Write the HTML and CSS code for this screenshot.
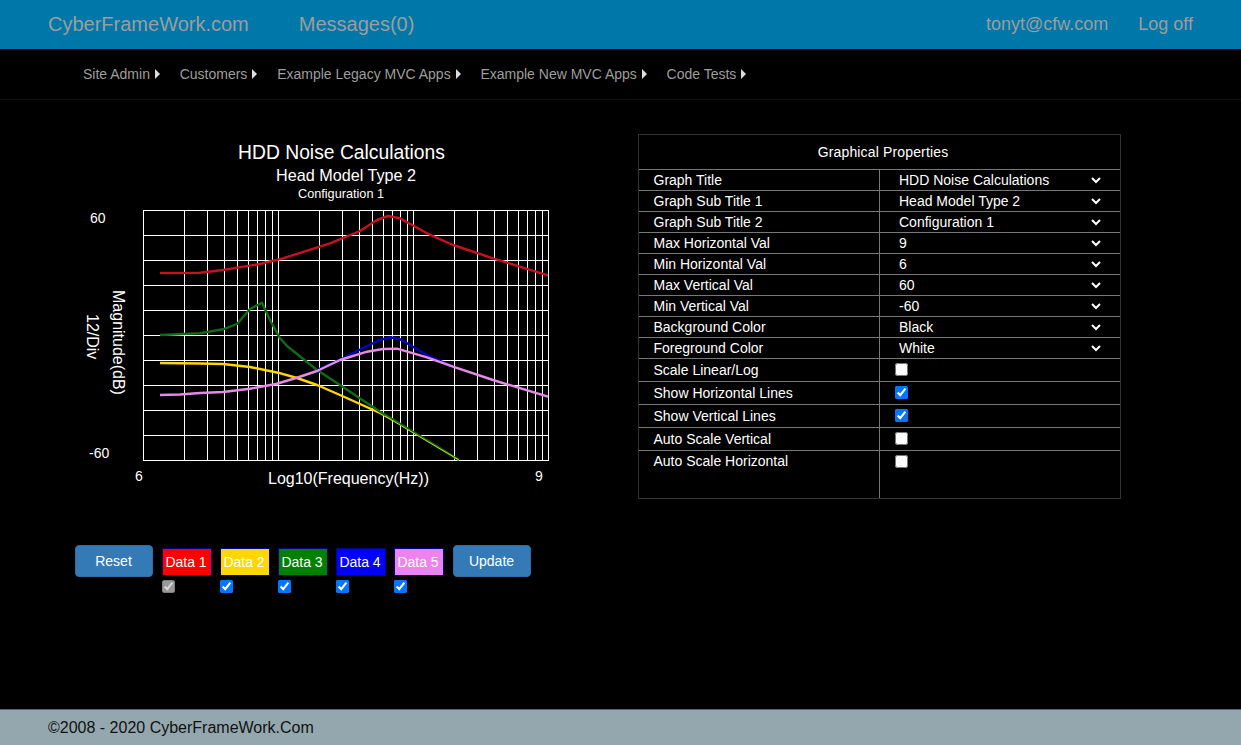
FILE: index.html
```html
<!DOCTYPE html>
<html lang="en">
<head>
<meta charset="utf-8">
<title>HDD Noise Calculations</title>
<link rel="stylesheet" href="styles.css">
</head>
<body>
<header class="topbar">
  <nav class="topbar-left"><a href="#">CyberFrameWork.com</a><a href="#">Messages(0)</a></nav>
  <nav class="topbar-right"><a href="#">tonyt@cfw.com</a><a href="#">Log off</a></nav>
</header>
<nav class="menu">
  <a href="#">Site Admin<i class="caret"></i></a>
  <a href="#">Customers<i class="caret"></i></a>
  <a href="#">Example Legacy MVC Apps<i class="caret"></i></a>
  <a href="#">Example New MVC Apps<i class="caret"></i></a>
  <a href="#">Code Tests<i class="caret"></i></a>
</nav>
<main class="content">
  <section class="graph-col">
    <svg class="graph" width="520" height="370" viewBox="60 130 520 370" xmlns="http://www.w3.org/2000/svg">
      <path class="grid" d="M143.5 210V461M184.5 210V461M207.5 210V461M224.5 210V461M237.5 210V461M248.5 210V461M257.5 210V461M265.5 210V461M272.5 210V461M278.5 210V461M319.5 210V461M342.5 210V461M359.5 210V461M372.5 210V461M383.5 210V461M392.5 210V461M400.5 210V461M407.5 210V461M413.5 210V461M454.5 210V461M477.5 210V461M494.5 210V461M507.5 210V461M518.5 210V461M527.5 210V461M535.5 210V461M542.5 210V461M548.5 210V461M143 210.5H549M143 235.5H549M143 260.5H549M143 285.5H549M143 310.5H549M143 335.5H549M143 360.5H549M143 385.5H549M143 410.5H549M143 435.5H549M143 460.5H549"/>
      <polyline class="trace t-red" points="160,273 200,272.7 223,270 260,264 283,258.3 330,243.3 360,231 377,220 388,216 400,218.3 427,233.3 453,245 493,258.3 548,275.3"/>
      <polyline class="trace t-yellow" points="160,363 200,363.5 223,364 250,367 278,372.7 297,378 317,385 340,395 380,413 393,420"/>
      <polyline class="trace t-green" points="160,335 200,333.3 223,329.3 237,324 250,309 262,302.7 270,320 280,338.3 287,346 317,370 340,385 380,411.7 420,436 459,460"/>
      <polyline class="trace-fine t-mix" points="385,416 420,437 459,460"/>
      <polyline class="trace t-blue" points="317,370 343,358.3 367,346 380,340 390,337.3 400,339.3 427,355 453,366.7"/>
      <polyline class="trace t-violet" points="160,395 180,394.5 200,393 223,392 250,388.7 276,384 296,378 317,371 340,360 367,351.7 383,349 397,348.7 427,357.3 453,366.7 493,380 548,396.7"/>
      <text class="t-title mid" x="341.5" y="159">HDD Noise Calculations</text>
      <text class="t-sub mid" x="346" y="181">Head Model Type 2</text>
      <text class="t-sub2 mid" x="341" y="198">Configuration 1</text>
      <text class="t-tick" x="90" y="223">60</text>
      <text class="t-tick" x="89" y="458">-60</text>
      <text class="t-tick" x="135" y="481">6</text>
      <text class="t-tick" x="535" y="481">9</text>
      <text class="t-axis" x="268" y="484">Log10(Frequency(Hz))</text>
      <text class="t-axis" transform="rotate(90 113 290)" x="113" y="290">Magnitude(dB)</text>
      <text class="t-axis" transform="rotate(90 87 314)" x="87" y="314">12/Div</text>
    </svg>
    <div class="controls">
      <button class="btn" type="button">Reset</button>
      <div class="series-list">
        <div class="series"><span class="swatch s-red">Data 1</span><input type="checkbox" checked disabled></div>
        <div class="series"><span class="swatch s-gold">Data 2</span><input type="checkbox" checked></div>
        <div class="series"><span class="swatch s-green">Data 3</span><input type="checkbox" checked></div>
        <div class="series"><span class="swatch s-blue">Data 4</span><input type="checkbox" checked></div>
        <div class="series"><span class="swatch s-violet">Data 5</span><input type="checkbox" checked></div>
      </div>
      <button class="btn" type="button">Update</button>
    </div>
  </section>
  <table class="props">
    <colgroup><col class="col-label"><col class="col-value"></colgroup>
    <thead><tr><th colspan="2">Graphical Properties</th></tr></thead>
    <tbody>
      <tr><td>Graph Title</td><td><select><option>HDD Noise Calculations</option></select></td></tr>
      <tr><td>Graph Sub Title 1</td><td><select><option>Head Model Type 2</option></select></td></tr>
      <tr><td>Graph Sub Title 2</td><td><select><option>Configuration 1</option></select></td></tr>
      <tr><td>Max Horizontal Val</td><td><select><option>9</option></select></td></tr>
      <tr><td>Min Horizontal Val</td><td><select><option>6</option></select></td></tr>
      <tr><td>Max Vertical Val</td><td><select><option>60</option></select></td></tr>
      <tr><td>Min Vertical Val</td><td><select><option>-60</option></select></td></tr>
      <tr><td>Background Color</td><td><select><option>Black</option></select></td></tr>
      <tr><td>Foreground Color</td><td><select><option>White</option></select></td></tr>
      <tr class="check-row"><td>Scale Linear/Log</td><td><input type="checkbox"></td></tr>
      <tr class="check-row"><td>Show Horizontal Lines</td><td><input type="checkbox" checked></td></tr>
      <tr class="check-row"><td>Show Vertical Lines</td><td><input type="checkbox" checked></td></tr>
      <tr class="check-row"><td>Auto Scale Vertical</td><td><input type="checkbox"></td></tr>
      <tr class="check-row last-row"><td>Auto Scale Horizontal</td><td><input type="checkbox"></td></tr>
    </tbody>
  </table>
</main>
<footer class="footer">©2008 - 2020 CyberFrameWork.Com</footer>
</body>
</html>
```
FILE: styles.css
```css
* { box-sizing: border-box; }
html, body { height: 100%; }
body {
  margin: 0;
  height: 745px;
  overflow: hidden;
  display: flex;
  flex-direction: column;
  background: #000;
  color: #fff;
  font: 14px/20px "Liberation Sans", Arial, sans-serif;
}
a { color: inherit; text-decoration: none; }

.topbar {
  height: 49px;
  flex: none;
  display: flex;
  justify-content: space-between;
  align-items: center;
  padding: 0 48px 2px;
  background: #0077a9;
  color: #9d9d9d;
  font-size: 20px;
}
.topbar-left { display: flex; gap: 50px; }
.topbar-right { display: flex; gap: 30px; font-size: 18px; }

.menu {
  height: 51px;
  flex: none;
  display: flex;
  align-items: center;
  gap: 19.75px;
  padding: 0 0 0 83px;
  border-bottom: 1px solid #101010;
  color: #9d9d9d;
}
.menu a { display: flex; align-items: center; }
.caret {
  width: 0;
  height: 0;
  margin-left: 5px;
  border-left: 5px solid #ddd;
  border-top: 5px solid transparent;
  border-bottom: 5px solid transparent;
}

.content { flex: 1; display: flex; align-items: flex-start; }
.graph-col { width: 638px; flex: none; }
.graph { display: block; margin: 30px 0 0 60px; }
.grid { fill: none; stroke: #fff; stroke-width: 1; shape-rendering: crispEdges; }
.trace { fill: none; stroke-width: 2.4; stroke-linejoin: round; }
.trace-fine { fill: none; stroke-width: 1; }
.t-red { stroke: #c8101f; }
.t-yellow { stroke: #ffd700; }
.t-green { stroke: #0f6b14; }
.t-mix { stroke: #c4dc22; }
.t-blue { stroke: #0000c8; }
.t-violet { stroke: #e58ae5; }
.graph text { fill: #fff; font-family: "Liberation Sans", Arial, sans-serif; }
.t-title { font-size: 19.3px; }
.t-sub { font-size: 16.2px; }
.t-sub2 { font-size: 12.7px; }
.t-tick { font-size: 14px; }
.t-axis { font-size: 16px; }
.mid { text-anchor: middle; }

.controls { display: flex; align-items: flex-start; margin: 45px 0 0 75px; }
.btn {
  width: 78px;
  height: 32px;
  padding: 0 1px 0 0;
  border: 1px solid #2e6da4;
  border-radius: 4px;
  background: #337ab7;
  color: #fff;
  font: inherit;
}
.series-list { display: flex; gap: 8px; margin: 3px 9px 0; }
.series { width: 50px; display: flex; flex-direction: column; align-items: flex-start; gap: 4px; }
.swatch {
  width: 50px;
  height: 28px;
  padding-right: 2px;
  border: 1px solid #00008b;
  text-align: center;
  line-height: 26px;
}
.s-red { background: #f00; }
.s-gold { background: #ffd700; }
.s-green { background: #008000; }
.s-blue { background: #00f; }
.s-violet { background: #ee82ee; }
input[type="checkbox"] { display: block; margin: 0; width: 13px; height: 13px; }

.props {
  width: 483px;
  height: 365px;
  margin-top: 34px;
  border: 1px solid #333;
  border-spacing: 0;
  table-layout: fixed;
}
.col-label { width: 240px; }
.col-value { width: 241px; }
.props th {
  height: 34px;
  padding: 0 0 0 7px;
  font-weight: 400;
  letter-spacing: 0.15px;
  text-align: center;
}
.props td {
  height: 21px;
  padding: 0 0 0 14.5px;
  border-top: 1px solid #777;
  line-height: 20px;
}
.props td + td { padding-left: 15px; border-left: 1px solid #777; }
.props select {
  display: block;
  width: 209px;
  height: 20px;
  padding: 0;
  border: 0;
  background: #000;
  color: #fff;
  font: inherit;
}
.check-row td { height: 23px; }
.check-row td + td { padding-bottom: 1px; }
.last-row td { height: 48px; vertical-align: top; padding-top: 0; }
.last-row td + td { padding-top: 4px; padding-bottom: 0; }

.footer {
  height: 36px;
  flex: none;
  display: flex;
  align-items: center;
  padding: 0 48px;
  border-top: 1px solid #2a6db0;
  background: #94a7ae;
  color: #111;
  font-size: 16px;
}
```
